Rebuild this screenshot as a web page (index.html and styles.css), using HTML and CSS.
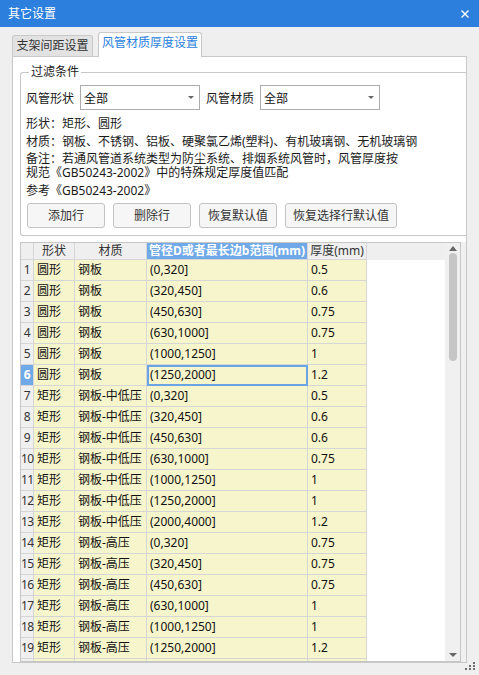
FILE: index.html
```html
<!DOCTYPE html>
<html lang="zh-CN">
<head>
<meta charset="utf-8">
<title>其它设置</title>
<link rel="stylesheet" href="styles.css">
</head>
<body>
<div class="titlebar">
  <span class="title">其它设置</span>
  <svg class="close" viewBox="0 0 8 8" width="8" height="8"><path d="M0.5 0.5 L7.5 7.5 M7.5 0.5 L0.5 7.5" stroke="#fff" stroke-width="1.4" fill="none"/></svg>
</div>
<div class="tabs">
  <div class="tab">支架间距设置</div>
  <div class="tab active">风管材质厚度设置</div>
</div>
<div class="panel">
  <div class="group">
    <span class="legend">过滤条件</span>
    <div class="filter">
      <span class="lbl">风管形状</span>
      <div class="select"><span>全部</span><i class="caret"></i></div>
      <span class="lbl">风管材质</span>
      <div class="select"><span>全部</span><i class="caret"></i></div>
    </div>
    <div class="info">
      <div>形状：矩形、圆形</div>
      <div>材质：钢板、不锈钢、铝板、硬聚氯乙烯(塑料)、有机玻璃钢、无机玻璃钢</div>
    </div>
    <div class="note">
      <div>备注：若通风管道系统类型为防尘系统、排烟系统风管时，风管厚度按</div>
      <div>规范《GB50243-2002》中的特殊规定厚度值匹配</div>
    </div>
    <div class="ref">参考《GB50243-2002》</div>
    <div class="buttons">
      <button class="btn">添加行</button>
      <button class="btn">删除行</button>
      <button class="btn">恢复默认值</button>
      <button class="btn wide">恢复选择行默认值</button>
    </div>
  </div>
  <div class="gridarea">
    <div class="grid">
      <div class="cols">
        <div class="row head">
          <div class="c"></div><div class="c">形状</div><div class="c">材质</div><div class="c sel">管径D或者最长边b范围(mm)</div><div class="c">厚度(mm)</div><div class="f"></div>
        </div>
        <div class="body">
          <div class="row"><div class="n">1</div><div class="c">圆形</div><div class="c">钢板</div><div class="c">(0,320]</div><div class="c">0.5</div><div class="f"></div></div>
          <div class="row"><div class="n">2</div><div class="c">圆形</div><div class="c">钢板</div><div class="c">(320,450]</div><div class="c">0.6</div><div class="f"></div></div>
          <div class="row"><div class="n">3</div><div class="c">圆形</div><div class="c">钢板</div><div class="c">(450,630]</div><div class="c">0.75</div><div class="f"></div></div>
          <div class="row"><div class="n">4</div><div class="c">圆形</div><div class="c">钢板</div><div class="c">(630,1000]</div><div class="c">0.75</div><div class="f"></div></div>
          <div class="row"><div class="n">5</div><div class="c">圆形</div><div class="c">钢板</div><div class="c">(1000,1250]</div><div class="c">1</div><div class="f"></div></div>
          <div class="row"><div class="n cur">6</div><div class="c">圆形</div><div class="c">钢板</div><div class="c focus">(1250,2000]</div><div class="c">1.2</div><div class="f"></div></div>
          <div class="row"><div class="n">7</div><div class="c">矩形</div><div class="c">钢板-中低压</div><div class="c">(0,320]</div><div class="c">0.5</div><div class="f"></div></div>
          <div class="row"><div class="n">8</div><div class="c">矩形</div><div class="c">钢板-中低压</div><div class="c">(320,450]</div><div class="c">0.6</div><div class="f"></div></div>
          <div class="row"><div class="n">9</div><div class="c">矩形</div><div class="c">钢板-中低压</div><div class="c">(450,630]</div><div class="c">0.6</div><div class="f"></div></div>
          <div class="row"><div class="n">10</div><div class="c">矩形</div><div class="c">钢板-中低压</div><div class="c">(630,1000]</div><div class="c">0.75</div><div class="f"></div></div>
          <div class="row"><div class="n">11</div><div class="c">矩形</div><div class="c">钢板-中低压</div><div class="c">(1000,1250]</div><div class="c">1</div><div class="f"></div></div>
          <div class="row"><div class="n">12</div><div class="c">矩形</div><div class="c">钢板-中低压</div><div class="c">(1250,2000]</div><div class="c">1</div><div class="f"></div></div>
          <div class="row"><div class="n">13</div><div class="c">矩形</div><div class="c">钢板-中低压</div><div class="c">(2000,4000]</div><div class="c">1.2</div><div class="f"></div></div>
          <div class="row"><div class="n">14</div><div class="c">矩形</div><div class="c">钢板-高压</div><div class="c">(0,320]</div><div class="c">0.75</div><div class="f"></div></div>
          <div class="row"><div class="n">15</div><div class="c">矩形</div><div class="c">钢板-高压</div><div class="c">(320,450]</div><div class="c">0.75</div><div class="f"></div></div>
          <div class="row"><div class="n">16</div><div class="c">矩形</div><div class="c">钢板-高压</div><div class="c">(450,630]</div><div class="c">0.75</div><div class="f"></div></div>
          <div class="row"><div class="n">17</div><div class="c">矩形</div><div class="c">钢板-高压</div><div class="c">(630,1000]</div><div class="c">1</div><div class="f"></div></div>
          <div class="row"><div class="n">18</div><div class="c">矩形</div><div class="c">钢板-高压</div><div class="c">(1000,1250]</div><div class="c">1</div><div class="f"></div></div>
          <div class="row"><div class="n">19</div><div class="c">矩形</div><div class="c">钢板-高压</div><div class="c">(1250,2000]</div><div class="c">1.2</div><div class="f"></div></div>
          <div class="row"><div class="n"></div><div class="c"></div><div class="c"></div><div class="c"></div><div class="c"></div><div class="f"></div></div>
        </div>
      </div>
      <div class="vscroll">
        <i class="arrow up"></i>
        <div class="thumb"></div>
        <i class="arrow down"></i>
      </div>
    </div>
    <div class="gutter"></div>
  </div>
</div>
<svg class="grip" width="11" height="10" viewBox="0 0 11 10">
  <rect x="8" y="0" width="2" height="2" fill="#6f6f6f"/>
  <rect x="4" y="3" width="2" height="2" fill="#6f6f6f"/>
  <rect x="8" y="3" width="2" height="2" fill="#6f6f6f"/>
  <rect x="0" y="6" width="2" height="2" fill="#6f6f6f"/>
  <rect x="4" y="6" width="2" height="2" fill="#6f6f6f"/>
  <rect x="8" y="6" width="2" height="2" fill="#6f6f6f"/>
</svg>
</body>
</html>
```

FILE: styles.css
```css
* { box-sizing: border-box; }
html, body { margin: 0; padding: 0; }
body {
  width: 479px;
  height: 675px;
  overflow: hidden;
  background: #efefef;
  font-family: "Noto Sans", "Noto Sans CJK SC", sans-serif;
  font-size: 12px;
  color: #1a1a1a;
  position: relative;
}

.titlebar {
  height: 27px;
  background: #2c7fdd;
  color: #fff;
  display: flex;
  align-items: center;
  justify-content: space-between;
  padding: 0 10px 0 8px;
}
.title { line-height: 27px; }
.close { display: block; }

.tabs {
  display: flex;
  align-items: flex-end;
  height: 29px;
  padding-left: 12px;
}
.tab {
  position: relative;
  height: 21px;
  width: 81px;
  border: 1px solid #c9c9c9;
  border-bottom: none;
  border-radius: 3px 3px 0 0;
  background: #e2e2e2;
  color: #333;
  text-align: center;
  line-height: 20px;
  white-space: nowrap;
}
.tab.active {
  z-index: 1;
  margin-left: 5px;
  margin-bottom: -1px;
  width: 104px;
  height: 25px;
  background: #fff;
  border-color: #c8c8c8;
  color: #2b7fde;
}

.panel {
  margin-left: 12px;
  width: 455px;
  height: 607px;
  border: 1px solid #c8c8c8;
  background: #fff;
  padding: 15px 0 0 7px;
}

.group {
  position: relative;
  height: 164px;
  border: 1px solid #c8c8c8;
  border-right: none;
  border-radius: 3px 0 0 3px;
  padding: 12px 0 0 5px;
}
.legend {
  position: absolute;
  top: -9px;
  left: 8px;
  padding: 0 2px;
  background: #fff;
  line-height: 16px;
  color: #222;
}

.filter {
  display: flex;
  align-items: center;
  gap: 6px;
  height: 25px;
}
.lbl { white-space: nowrap; }
.select {
  width: 120px;
  height: 25px;
  border: 1px solid #acacac;
  background: #fff;
  display: flex;
  align-items: center;
  justify-content: space-between;
  padding: 0 5px 0 3px;
  color: #111;
}
.caret {
  display: block;
  width: 0;
  height: 0;
  border-top: 3px solid #666;
  border-left: 3px solid transparent;
  border-right: 3px solid transparent;
}

.info {
  margin-top: 5px;
  line-height: 18px;
  white-space: nowrap;
}
.note {
  margin-top: 1px;
  line-height: 14px;
  white-space: nowrap;
}
.ref {
  margin-top: 2px;
  line-height: 18px;
}

.buttons {
  margin-top: 3px;
  margin-left: 1px;
  display: flex;
  gap: 8px;
}
.btn {
  width: 78px;
  height: 25px;
  border: 1px solid #c3c3c3;
  border-radius: 3px;
  background: #f6f6f6;
  color: #333;
  font-family: inherit;
  font-size: 12px;
  line-height: 23px;
  padding: 0;
}
.btn.wide { width: 112px; }

.gridarea {
  margin-top: 6px;
  display: flex;
  height: 420px;
}
.grid {
  width: 441px;
  height: 420px;
  border: 1px solid #c6c6c6;
  background: #fff;
  display: flex;
  overflow: hidden;
}
.gutter {
  flex: 1;
  background: #f0f0f0;
}
.cols {
  width: 424px;
  display: flex;
  flex-direction: column;
  overflow: hidden;
}
.row {
  display: grid;
  grid-template-columns: 13px 41px 72px 161px 59px 1fr;
  height: 21px;
  flex: none;
}
.row.head {
  height: 17px;
  background: #efefef;
}
.body {
  flex: 1;
  overflow: hidden;
}
.c, .n {
  border-right: 1px solid #d6d6d6;
  border-bottom: 1px solid #d6d6d6;
  white-space: nowrap;
  overflow: hidden;
}
.c {
  background: #f7f5cb;
  padding-left: 3px;
  line-height: 20px;
  color: #111;
}
.head .c {
  background: #efefef;
  text-align: center;
  padding: 0;
  line-height: 16px;
  color: #333;
}
.head .c.sel {
  background: #6fa9e8;
  color: #fff;
  font-weight: bold;
}
.n {
  background: #f0f0f0;
  text-align: center;
  line-height: 20px;
  color: #333;
  letter-spacing: -0.6px;
  overflow: visible;
}
.n.cur {
  background: #6fa9e8;
  color: #fff;
  font-weight: bold;
}
.c.focus {
  outline: 2px solid #6aa4e4;
  outline-offset: -2px;
}
.f { background: transparent; }

.vscroll {
  width: 15px;
  background: #f0f0f0;
  display: flex;
  flex-direction: column;
  align-items: center;
  padding: 3px 0 4px;
}
.arrow {
  display: block;
  width: 0;
  height: 0;
  border-left: 4.5px solid transparent;
  border-right: 4.5px solid transparent;
}
.arrow.up { border-bottom: 5px solid #666; }
.arrow.down { border-top: 4px solid #666; margin-top: auto; }
.thumb {
  margin-top: 2px;
  width: 8px;
  height: 108px;
  border-radius: 4px;
  background: #c6c6c6;
}

.grip {
  position: absolute;
  right: 3px;
  bottom: 3px;
}
```
